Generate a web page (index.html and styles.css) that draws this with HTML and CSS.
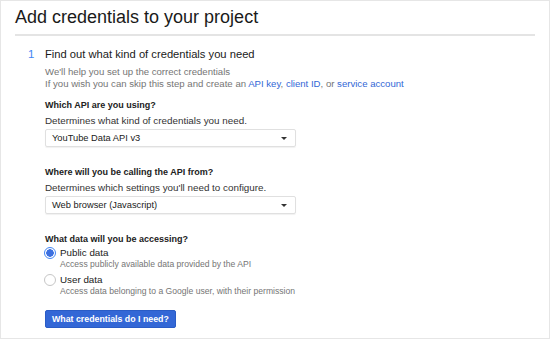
FILE: index.html
```html
<!DOCTYPE html>
<html lang="en">
<head>
    <meta charset="UTF-8">
    <title>Add credentials to your project</title>
    <link rel="stylesheet" href="styles.css">
</head>
<body>
    <div class="frame">
        <h1 class="title">Add credentials to your project</h1>
        <div class="divider"></div>

        <div class="step">
            <div class="step-num">1</div>
            <div class="step-body">
                <div class="step-title">Find out what kind of credentials you need</div>
                <p class="intro">We'll help you set up the correct credentials<br>
                    If you wish you can skip this step and create an <a href="#">API key</a>, <a href="#">client ID</a>, or <a href="#">service account</a></p>

                <div class="field">
                    <div class="label">Which API are you using?</div>
                    <div class="hint">Determines what kind of credentials you need.</div>
                    <div class="select">
                        <span>YouTube Data API v3</span>
                        <span class="arrow"></span>
                    </div>
                </div>

                <div class="field">
                    <div class="label">Where will you be calling the API from?</div>
                    <div class="hint">Determines which settings you'll need to configure.</div>
                    <div class="select">
                        <span>Web browser (Javascript)</span>
                        <span class="arrow"></span>
                    </div>
                </div>

                <div class="field radios">
                    <div class="label">What data will you be accessing?</div>
                    <div class="radio checked">
                        <span class="dot"></span>
                        <div>
                            <div class="radio-name">Public data</div>
                            <div class="radio-desc">Access publicly available data provided by the API</div>
                        </div>
                    </div>
                    <div class="radio">
                        <span class="dot"></span>
                        <div>
                            <div class="radio-name">User data</div>
                            <div class="radio-desc">Access data belonging to a Google user, with their permission</div>
                        </div>
                    </div>
                </div>

                <button class="primary">What credentials do I need?</button>
            </div>
        </div>
    </div>
</body>
</html>
```

FILE: styles.css
```css
body {
    margin: 0;
    font-family: "Liberation Sans", Arial, sans-serif;
    color: #212121;
    background: #fff;
}

.frame {
    box-sizing: border-box;
    width: 550px;
    height: 339px;
    border: 1px solid #e6e6e6;
    overflow: hidden;
}

.title {
    margin: 0;
    padding: 4px 0 0 14px;
    height: 29px;
    font-size: 18px;
    line-height: 24px;
    font-weight: normal;
    color: #1a1a1a;
}

.divider {
    height: 2px;
    margin: 0 14px;
    background: #e4e4e4;
}

.step {
    display: flex;
    padding-top: 10px;
}

.step-num {
    width: 44px;
    box-sizing: border-box;
    padding-left: 27px;
    font-size: 11.5px;
    line-height: 16px;
    color: #4285f4;
}

.step-title {
    font-size: 11.2px;
    line-height: 16px;
    color: #1a1a1a;
}

.intro {
    margin: 4px 0 0;
    font-size: 9.6px;
    line-height: 12px;
    color: #757575;
}

.intro a {
    color: #3367d6;
    text-decoration: none;
}

.field {
    margin-top: 9px;
}

.field + .field {
    margin-top: 19px;
}

.label {
    font-size: 9px;
    line-height: 12px;
    font-weight: bold;
    color: #212121;
}

.hint {
    margin-top: 4px;
    font-size: 9.85px;
    line-height: 12px;
    color: #333;
}

.select {
    box-sizing: border-box;
    width: 251px;
    height: 18px;
    margin-top: 2px;
    padding: 0 8px 0 6px;
    display: flex;
    align-items: center;
    justify-content: space-between;
    border: 1px solid #e0e0e0;
    border-radius: 2px;
    box-shadow: 0 1px 1px rgba(0, 0, 0, 0.06);
    font-size: 9.3px;
    color: #212121;
}

.arrow {
    width: 0;
    height: 0;
    border-left: 3px solid transparent;
    border-right: 3px solid transparent;
    border-top: 3px solid #333;
}

.radios .label {
    margin-bottom: 2px;
}

.radio {
    display: flex;
    align-items: flex-start;
    gap: 4px;
    margin-left: -1px;
}

.radio + .radio {
    margin-top: 4px;
}

.dot {
    box-sizing: border-box;
    width: 12px;
    height: 12px;
    border: 1px solid #c6c6c6;
    border-radius: 50%;
    flex-shrink: 0;
}

.radio.checked .dot {
    border: 1px solid #4285f4;
    background: radial-gradient(circle, #3b6fe0 0 3.5px, #fff 4px);
}

.radio-name {
    font-size: 9.8px;
    line-height: 11px;
    color: #212121;
}

.radio-desc {
    margin-top: 1px;
    font-size: 8.6px;
    line-height: 11px;
    color: #757575;
}

.primary {
    display: block;
    margin-top: 13px;
    height: 18px;
    padding: 0 6px;
    border: 1px solid #2a5cc6;
    border-radius: 2px;
    background: #3367d6;
    color: #fff;
    font-family: inherit;
    font-size: 8.8px;
    font-weight: bold;
}
```
